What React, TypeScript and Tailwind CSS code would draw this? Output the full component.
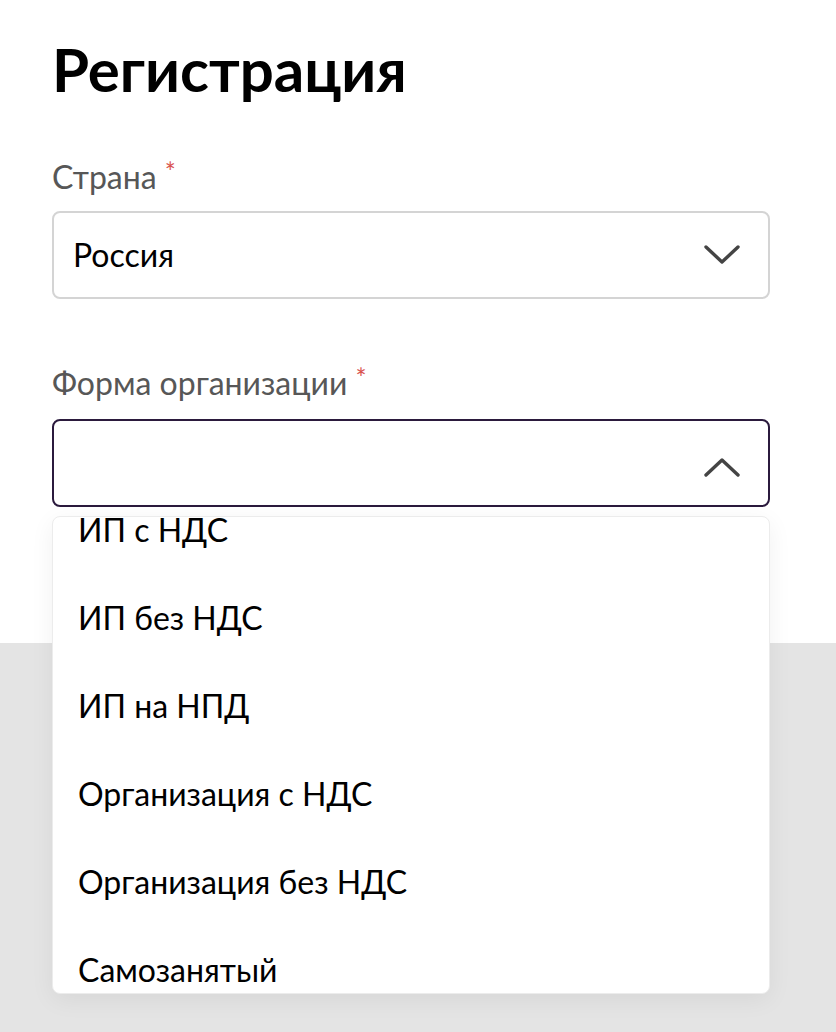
import React from "react";

const Chevron = ({ up }: { up?: boolean }) => (
  <svg width="36" height="20" viewBox="0 0 36 20" fill="none">
    {up ? (
      <path d="M2 18 L18 3 L34 18" stroke="#444" strokeWidth="3.4" strokeLinecap="round" strokeLinejoin="round" />
    ) : (
      <path d="M2 2 L18 17 L34 2" stroke="#444" strokeWidth="3.4" strokeLinecap="round" strokeLinejoin="round" />
    )}
  </svg>
);

const Label = ({ text }: { text: string }) => (
  <div className="flex items-start h-[40px] text-[32px] leading-[40px] text-[#575757]">
    <span>{text}</span>
    <span className="ml-[8px] mt-[2px] text-[26px] leading-[26px] text-[#d9534f]">*</span>
  </div>
);

export default function App() {
  const items = [
    "ИП с НДС",
    "ИП без НДС",
    "ИП на НПД",
    "Организация с НДС",
    "Организация без НДС",
    "Самозанятый",
  ];
  return (
    <div
      className="w-[836px] h-[1032px] overflow-hidden bg-white flex flex-col"
      style={{ fontFamily: "Lato, 'Open Sans', sans-serif" }}
    >
      <div className="pl-[52px] pt-[33px] h-[643px] shrink-0">
        <h1 className="text-[60px] leading-[72px] font-bold text-black">Регистрация</h1>
        <div className="mt-[52px]">
          <Label text="Страна" />
        </div>
        <div className="mt-[14px] w-[718px] h-[88px] rounded-[8px] border-2 border-[#d4d4d4] flex items-center justify-between pl-[19px] pr-[28px]">
          <span className="text-[32px] text-black">Россия</span>
          <Chevron />
        </div>
        <div className="mt-[64px]">
          <Label text="Форма организации" />
        </div>
        <div className="relative mt-[16px] w-[718px]">
          <div className="h-[88px] rounded-[8px] border-2 border-[#2b1a3d] flex items-center justify-end pr-[28px] pt-[8px]">
            <Chevron up />
          </div>
          <div className="absolute left-0 top-[97px] z-10 w-[718px] h-[478px] rounded-[8px] border border-[#ececec] bg-white overflow-hidden shadow-[0_6px_24px_rgba(0,0,0,0.06)]">
            <div className="-mt-[31px]">
              {items.map((t) => (
                <div key={t} className="h-[88px] flex items-center pl-[25px] text-[32px] leading-[38px] text-black">
                  {t}
                </div>
              ))}
            </div>
          </div>
        </div>
      </div>
      <div className="flex-1 bg-[#e4e4e4]" />
    </div>
  );
}
